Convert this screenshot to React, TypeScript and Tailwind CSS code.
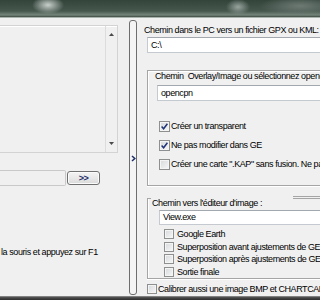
import React from "react";

function Box({ checked = false, big = false }: { checked?: boolean; big?: boolean }) {
  return (
    <span
      className={
        big
          ? "relative flex-none w-[11px] h-[11px] border border-[#8e8f8f] bg-[linear-gradient(135deg,#d6d8db,#f7f7f7)] shadow-[inset_0_0_0_1px_#f4f4f4]"
          : "relative flex-none w-[10px] h-[10px] border border-[#8e8f8f] bg-[linear-gradient(135deg,#d6d8db,#f7f7f7)] shadow-[inset_0_0_0_1px_#f4f4f4]"
      }
    >
      {checked && (
        <svg viewBox="0 0 9 9" className="absolute left-0 top-0 w-[9px] h-[9px]">
          <path d="M1.6 4.6 L3.6 6.8 L7.4 1.8" fill="none" stroke="#1f3476" strokeWidth="1.5" />
        </svg>
      )}
    </span>
  );
}

export default function App() {
  return (
    <div className="w-[320px] h-[300px] overflow-hidden whitespace-nowrap font-['Liberation_Sans',Arial,sans-serif] text-[9px] leading-[11px] tracking-[-0.42px] text-black">
      {/* desktop strip */}
      <div className="h-[17px] bg-[image:radial-gradient(ellipse_16px_9px_at_48px_5px,#c9d0cc,transparent),radial-gradient(ellipse_12px_8px_at_238px_7px,#97a49d,transparent),radial-gradient(ellipse_40px_10px_at_300px_6px,#6d7a73,transparent),linear-gradient(to_bottom,#33443b,#46574e_65%,#75857c_88%,#3d4a43)]" />

      {/* window body */}
      <div className="h-[279px] flex bg-[#f0f0f0] border-t border-[#a9b2ad]">
        {/* left column */}
        <div className="w-[129px] flex flex-col">
          <div className="mt-[7px] w-[118px] h-[128px] flex border border-l-0 border-[#d3d3d3] shadow-[inset_0_1px_0_#fff]">
            <div className="flex-1" />
            <div className="w-[12px] flex flex-col items-center justify-between border-l border-[#dcdcdc] py-[7px]">
              <svg viewBox="0 0 5 3" className="w-[5px] h-[3px]">
                <path d="M0 3 L2.5 0 L5 3 Z" fill="#4a4a4a" />
              </svg>
              <svg viewBox="0 0 5 3" className="w-[5px] h-[3px]">
                <path d="M0 0 L2.5 3 L5 0 Z" fill="#4a4a4a" />
              </svg>
            </div>
          </div>
          <div className="mt-[17px] flex items-center gap-[1px]">
            <div className="w-[66px] h-[16px] border border-l-0 border-[#c9c9c9] rounded-r-[2px] bg-[#f0f0f0]" />
            <div className="w-[33px] h-[14px] border border-[#707070] rounded-[3px] bg-[linear-gradient(to_bottom,#f4f4f4,#e9e9e9_50%,#dadada)] shadow-[inset_0_0_0_1px_#fbfbfb] flex items-center justify-center text-[#1b2c6b] font-bold tracking-[-0.6px]">
              &gt;&gt;
            </div>
          </div>
          <div className="mt-[61px] pl-[1px]">la souris et appuyez sur F1</div>
        </div>

        {/* splitter */}
        <div className="mt-[2px] w-[8px] h-[275px] border border-[#6e6e6e] rounded-[3px] bg-[#f4f4f4] flex flex-col items-center">
          <svg viewBox="0 0 5 7" className="mt-[134px] w-[5px] h-[7px]">
            <path d="M1 1 L3.8 3.5 L1 6" fill="none" stroke="#1d2f66" strokeWidth="1.5" />
          </svg>
        </div>

        {/* right column */}
        <div className="flex-1 min-w-0 overflow-hidden flex flex-col">
          <div className="mt-[7px] pl-[7px]">Chemin dans le PC vers un fichier GPX ou KML:</div>
          <div className="mt-[1px] ml-[10px] h-[16px] flex items-center pl-[3px] bg-white border border-r-0 border-[#c5c9d0] border-t-[#a3a7ae]">
            C:\
          </div>

          {/* group 1 */}
          <div className="mt-[17px] ml-[10px] h-[116px] flex flex-col border border-r-0 border-[#a5a5a5] shadow-[inset_1px_1px_0_#fff,0_1px_0_#fff]">
            <div className="pl-[7px] whitespace-pre">Chemin  Overlay/Image ou sélectionnez opencpn</div>
            <div className="mt-[3px] ml-[9px] h-[16px] flex items-center pl-[3px] bg-white border border-r-0 border-[#c5c9d0] border-t-[#a3a7ae]">
              opencpn
            </div>
            <div className="mt-[20px] ml-[11px] h-[11px] flex items-center gap-[1px]">
              <Box big checked />
              <span>Créer un transparent</span>
            </div>
            <div className="mt-[8px] ml-[11px] h-[11px] flex items-center gap-[1px]">
              <Box big checked />
              <span>Ne pas modifier dans GE</span>
            </div>
            <div className="mt-[8px] ml-[11px] h-[11px] flex items-center gap-[1px]">
              <Box big />
              <span>Créer une carte ".KAP" sans fusion. Ne pas modifier</span>
            </div>
          </div>

          {/* group 2 */}
          <div className="mt-[12px] ml-[10px] h-[81px] flex flex-col border-l border-b border-[#a5a5a5] shadow-[inset_1px_0_0_#fff,0_1px_0_#fff]">
            <div className="h-[11px] flex items-start">
              <div className="w-[3px] border-t border-[#a5a5a5]" />
              <div className="w-[142px] pl-[1px]">Chemin vers l'éditeur d'image :</div>
              <div className="flex-1 -mt-[2px] h-[3px] border-y border-[#a5a5a5]" />
            </div>
            <div className="mt-[1px] ml-[11px] h-[15px] flex items-center pl-[3px] bg-white border border-r-0 border-[#c5c9d0] border-t-[#a3a7ae]">
              View.exe
            </div>
            <div className="mt-[4px] ml-[16px] h-[10px] flex items-center gap-[3px] leading-[10px]">
              <Box />
              <span>Google Earth</span>
            </div>
            <div className="mt-[3px] ml-[16px] h-[10px] flex items-center gap-[3px] leading-[10px]">
              <Box />
              <span>Superposition avant ajustements de GE</span>
            </div>
            <div className="mt-[2px] ml-[16px] h-[10px] flex items-center gap-[3px] leading-[10px]">
              <Box />
              <span>Superposition après ajustements de GE</span>
            </div>
            <div className="mt-[3px] ml-[16px] h-[10px] flex items-center gap-[3px] leading-[10px]">
              <Box />
              <span>Sortie finale</span>
            </div>
          </div>

          <div className="mt-[5px] ml-[10px] h-[10px] flex items-center gap-[1px] leading-[10px]">
            <Box />
            <span>Calibrer aussi une image BMP et CHARTCAL.txt</span>
          </div>
        </div>
      </div>

      {/* bottom strip */}
      <div className="h-[4px] bg-[linear-gradient(to_bottom,#9a9a9a,#4a4a4a_40%,#2e2e2e)]" />
    </div>
  );
}
